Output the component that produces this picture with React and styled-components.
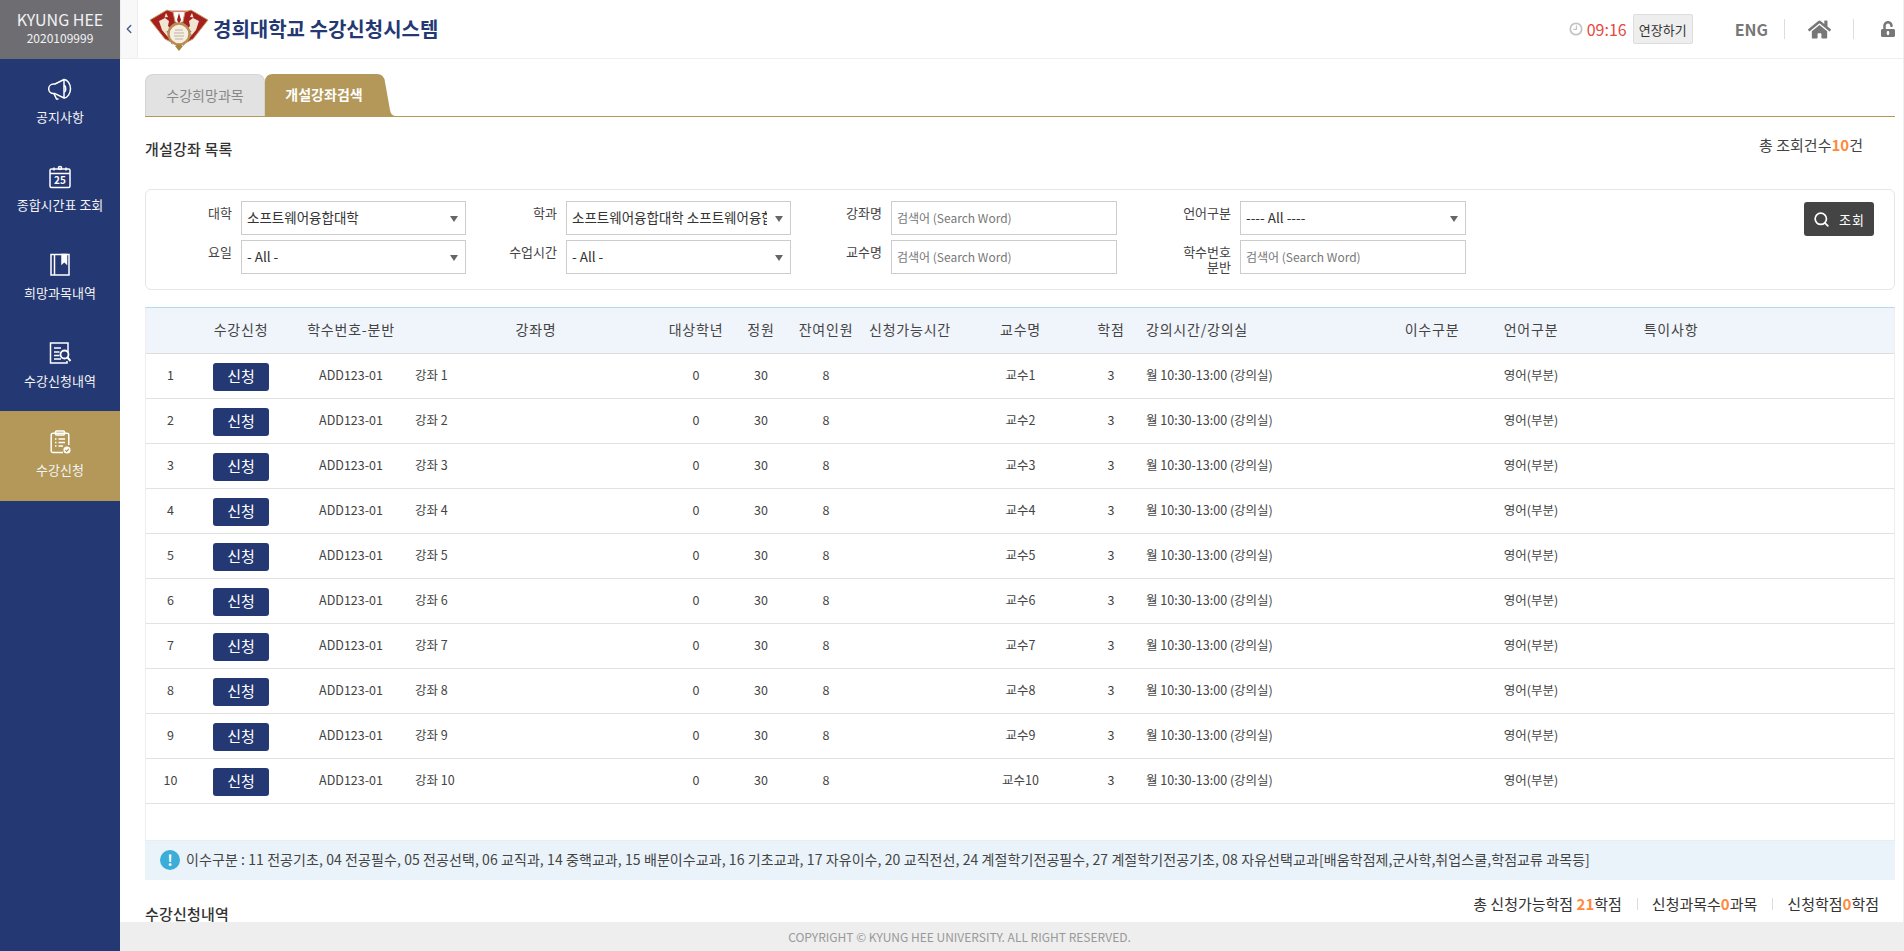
import React from 'react'
import styled, { createGlobalStyle } from 'styled-components'
import { ChevronLeft, Search } from 'lucide-react'
import { FaHome, FaUnlockAlt } from 'react-icons/fa'

const navy = '#243873'
const gold = '#b39859'

const GlobalStyle = createGlobalStyle`
  html, body {
    margin: 0;
    height: 100%;
  }
  body {
    font-family: "Noto Sans CJK KR", "Noto Sans", sans-serif;
    font-size: 12px;
    color: #444;
    background: #fff;
  }
  * {
    box-sizing: border-box;
  }
`

const Page = styled.div`
  display: flex;
  height: 100vh;
  overflow: hidden;
`

const Sidebar = styled.aside`
  flex: 0 0 120px;
  background: ${navy};
  color: #fff;
`

const UserBox = styled.div`
  height: 59px;
  background: #6e6e72;
  text-align: center;
  padding-top: 8px;
`

const UserName = styled.div`
  font-size: 16px;
  line-height: 22px;
  color: #f2f2f2;
`

const UserId = styled.div`
  font-size: 12px;
  line-height: 16px;
  color: #f2f2f2;
`

const MenuItem = styled.div`
  height: ${(p) => (p.$active ? '90px' : '88px')};
  background: ${(p) => (p.$active ? gold : 'transparent')};
  display: flex;
  flex-direction: column;
  align-items: center;
  padding-top: ${(p) => (p.$active ? '19px' : '18px')};
`

const MenuIcon = styled.svg`
  width: 24px;
  height: 24px;
  fill: none;
  stroke: #fff;
  stroke-width: 1.5;
  flex: none;
`

const MenuLabel = styled.span`
  margin-top: 7px;
  font-size: 13px;
  line-height: 18px;
  color: #f4f4f4;
  white-space: nowrap;
`

const Main = styled.main`
  flex: 1;
  min-width: 0;
  display: flex;
  flex-direction: column;
  border-right: 1px solid #eee;
`

const Header = styled.header`
  flex: 0 0 59px;
  display: flex;
  align-items: center;
  border-bottom: 1px solid #eee;
`

const Collapse = styled.div`
  flex: 0 0 18px;
  height: 100%;
  display: flex;
  align-items: center;
  justify-content: center;
  background: #f8f8f8;
  border-left: 1px solid #f0f0f0;
  border-right: 1px solid #eee;
  color: #47618f;
`

const Logo = styled.svg`
  width: 64px;
  height: 46px;
  margin: 0 1px 0 10px;
  flex: none;
`

const SiteTitle = styled.h1`
  margin: 0;
  font-size: 20px;
  line-height: 28px;
  font-weight: 700;
  color: ${navy};
  white-space: nowrap;
`

const HeaderRight = styled.div`
  margin-left: auto;
  display: flex;
  align-items: center;
  padding-right: 7px;
`

const Clock = styled.svg`
  width: 14px;
  height: 14px;
  fill: none;
  stroke: #c4c4c4;
  stroke-width: 2;
  margin-right: 4px;
`

const Time = styled.span`
  font-size: 16px;
  color: #e6483d;
  margin-right: 6px;
`

const Extend = styled.button`
  width: 60px;
  height: 30px;
  padding: 0;
  background: #eee;
  border: 1px solid #ddd;
  border-radius: 2px;
  font-family: inherit;
  font-size: 13px;
  color: #333;
  margin-right: 42px;
`

const Eng = styled.span`
  font-size: 16px;
  font-weight: 700;
  color: #777;
`

const Divider = styled.span`
  width: 1px;
  height: 20px;
  background: #ddd;
  margin: ${(p) => p.$margin};
`

const Content = styled.div`
  flex: 1;
  min-height: 0;
  overflow: hidden;
  padding: 15px 8px 0 25px;
`

const TabBar = styled.div`
  display: flex;
  height: 43px;
  border-bottom: 1px solid ${gold};
`

const Tab = styled.div`
  width: 120px;
  height: 42px;
  padding-bottom: 2px;
  display: flex;
  align-items: center;
  justify-content: center;
  background: #e2e2e2;
  border: 1px solid #d4d4d4;
  border-bottom: 0;
  border-radius: 8px 8px 0 0;
  font-size: 14px;
  color: #888;
`

const ActiveTab = styled.div`
  width: 131px;
  height: 42px;
  padding: 0 13px 2px 0;
  display: flex;
  align-items: center;
  justify-content: center;
  background: ${gold};
  clip-path: path("M0 42 V8 Q0 0 8 0 H112 Q119 0 120 8 L125 36 Q126 42 131 42 Z");
  font-size: 14px;
  font-weight: 700;
  color: #fff;
`

const SectionHead = styled.div`
  display: flex;
  justify-content: space-between;
  height: 72px;
`

const Heading = styled.h2`
  margin: 0;
  padding-top: ${(p) => p.$top};
  font-size: 15px;
  line-height: 20px;
  font-weight: 500;
  letter-spacing: 0.2px;
  color: #333;
`

const TotalCount = styled.div`
  padding: 18px 32px 0 0;
  font-size: 15px;
  line-height: 20px;
  color: #444;
`

const Orange = styled.b`
  color: #ff8a3c;
`

const FilterCard = styled.form`
  display: grid;
  grid-template-columns: 95px 225px 100px 225px 100px 226px 123px 226px 1fr;
  grid-auto-rows: 34px;
  row-gap: 5px;
  height: 101px;
  padding-top: 11px;
  border: 1px solid #e6e6e6;
  border-radius: 6px;
  margin-bottom: 17px;
`

const FilterLabel = styled.label`
  padding: 4px 9px 0 0;
  text-align: right;
  font-size: 13px;
  line-height: 15px;
  color: #444;
`

const SelectWrap = styled.div`
  position: relative;

  &::after {
    content: '';
    position: absolute;
    right: 8px;
    top: 15px;
    border-left: 4px solid transparent;
    border-right: 4px solid transparent;
    border-top: 6px solid #666;
  }
`

const Select = styled.select`
  width: 100%;
  height: 34px;
  appearance: none;
  padding: 0 23px 3px 5px;
  border: 1px solid #ccc;
  border-radius: 0;
  background: #fff;
  font-family: inherit;
  font-size: 13.5px;
  color: #333;
`

const Input = styled.input`
  width: 100%;
  height: 34px;
  padding: 0 5px 2px;
  border: 1px solid #ccc;
  border-radius: 0;
  font-family: inherit;
  font-size: 12px;

  &::placeholder {
    color: #777;
  }
`

const SearchButton = styled.button`
  justify-self: end;
  width: 70px;
  height: 34px;
  margin: 1px 20px 0 0;
  display: flex;
  align-items: center;
  justify-content: center;
  gap: 9px;
  padding: 0;
  background: #444;
  border: 0;
  border-radius: 3px;
  font-family: inherit;
  font-size: 13px;
  letter-spacing: 1px;
  color: #fff;
`

const TableBox = styled.div`
  border-left: 1px solid #eee;
  border-right: 1px solid #eee;
  border-top: 1px solid #b4d9f2;
  padding-bottom: 36px;
`

const Table = styled.table`
  width: 100%;
  table-layout: fixed;
  border-collapse: collapse;
`

const Th = styled.th`
  height: 45px;
  padding: 0 0 2px ${(p) => (p.$left ? '10px' : '0')};
  background: #f0f4fb;
  border-bottom: 1px solid #ddd;
  font-size: 14px;
  font-weight: 400;
  letter-spacing: 0.8px;
  color: #444;
  text-align: ${(p) => (p.$left ? 'left' : 'center')};
  white-space: nowrap;
`

const Td = styled.td`
  height: 45px;
  padding: 0 0 2px ${(p) => (p.$indent ? '10px' : '0')};
  border-bottom: 1px solid #e2e2e2;
  font-size: 12.5px;
  color: #444;
  text-align: ${(p) => (p.$left ? 'left' : 'center')};
  white-space: nowrap;
`

const ApplyButton = styled.button`
  width: 56px;
  height: 28px;
  margin-top: 4px;
  padding: 0 0 2px;
  background: ${navy};
  border: 0;
  border-radius: 3px;
  font-family: inherit;
  font-size: 15px;
  color: #fff;
  vertical-align: middle;
`

const InfoBox = styled.div`
  height: 40px;
  display: flex;
  align-items: center;
  padding: 0 0 2px 15px;
  background: #eaf3fa;
  border-top: 1px solid #e4eef6;
  font-size: 14px;
  letter-spacing: 0.08px;
  color: #444;
  white-space: nowrap;
`

const InfoIcon = styled.span`
  flex: none;
  width: 20px;
  height: 20px;
  margin: 2px 6px 0 0;
  border-radius: 50%;
  background: #3badd9;
  color: #fff;
  font-size: 15px;
  font-weight: 700;
  line-height: 20px;
  text-align: center;
`

const SummaryRow = styled.div`
  display: flex;
  justify-content: space-between;
`

const Summary = styled.div`
  display: flex;
  align-items: center;
  align-self: flex-start;
  padding: 14px 16px 0 0;
  font-size: 15px;
  line-height: 20px;
  color: #333;
`

const SummarySep = styled.span`
  width: 1px;
  height: 12px;
  margin: 0 14px 0 15px;
  background: #ddd;
`

const Footer = styled.footer`
  flex: 0 0 29px;
  display: flex;
  align-items: center;
  justify-content: center;
  padding-right: 104px;
  background: #eee;
  font-size: 12px;
  color: #999;
`

const columns = [49, 92, 128, 242, 78, 52, 78, 90, 131, 50, 256, 80, 118, 162]

const heads = [
  { label: '' },
  { label: '수강신청' },
  { label: '학수번호-분반' },
  { label: '강좌명' },
  { label: '대상학년' },
  { label: '정원' },
  { label: '잔여인원' },
  { label: '신청가능시간' },
  { label: '교수명' },
  { label: '학점' },
  { label: '강의시간/강의실', left: true },
  { label: '이수구분' },
  { label: '언어구분' },
  { label: '특이사항' },
  { label: '' }
]

const rows = Array.from({ length: 10 }, (_, i) => i + 1)

const FlagSide = () => (
  <>
    <path d="M2 14 L19 4 L25 6 L28 20 L27 38 L17 33 Z" fill="#a5201f" stroke="#c9a063" strokeWidth="1" />
    <path d="M11 15 L17 12 L21 15 L20 20 L25 25 L25 35 L19 30 L14 24 Z" fill="#f1e5cf" />
    <path d="M18 7 L20 11 L16.5 11.5 Z" fill="#f1e5cf" />
  </>
)

const Emblem = () => (
  <Logo viewBox="0 0 64 46">
    <rect x="22" y="4.5" width="18" height="1.6" fill="#d9827a" />
    <FlagSide />
    <g transform="matrix(-1 0 0 1 62 0)">
      <FlagSide />
    </g>
    <path d="M31 7 L33 14 L31 18 L29 14 Z" fill="#a5201f" />
    <circle cx="31" cy="28" r="10.5" fill="#f6efe0" stroke="#bd8c52" strokeWidth="2.4" />
    <circle cx="31" cy="28" r="12" fill="none" stroke="#3d5a8c" strokeWidth="0.8" strokeDasharray="1.5 5" />
    <path d="M27 24 H35 M26 27 H36 M26 30 H36 M27 33 H35" stroke="#b9b3a6" strokeWidth="1" />
    <path d="M27 40 L31 45 L35 40 L31 38 Z" fill="#a8843f" />
  </Logo>
)

const MegaphoneIcon = () => (
  <MenuIcon viewBox="0 0 24 24">
    <path d="M16 2.5 L7 7 H5.5 a4.8 4.8 0 0 0 0 9.6 H7 L16 21 Z" strokeLinejoin="round" />
    <path d="M16 2.5 C19.5 2.5 22.5 7 22.5 11.8 C22.5 16.5 19.5 21 16 21" />
    <path d="M16 8.5 C18 8.5 18.5 15 16 15" />
    <path d="M6 16.6 L8.5 22 H10.5" />
  </MenuIcon>
)

const CalendarIcon = () => (
  <MenuIcon viewBox="0 0 24 24">
    <rect x="2" y="4" width="20" height="18.5" rx="1.5" />
    <path d="M2 8.5 H22" />
    <path d="M6 2.5 V5.5 M18 2.5 V5.5" />
    <circle cx="12" cy="3" r="1.6" />
    <text x="12" y="19" textAnchor="middle" fontSize="10" fontWeight="700" fill="#fff" stroke="none" fontFamily="Noto Sans CJK KR, sans-serif">25</text>
  </MenuIcon>
)

const BookIcon = () => (
  <MenuIcon viewBox="0 0 24 24">
    <rect x="3" y="1.5" width="18" height="20.5" />
    <path d="M6.5 1.5 V22" />
    <path d="M14 1.5 H18.5 V10.5 L16.2 8.5 L14 10.5 Z" fill="#fff" />
  </MenuIcon>
)

const DocSearchIcon = () => (
  <MenuIcon viewBox="0 0 24 24">
    <path d="M20 11 V2 H2.5 V22 H19 V20" />
    <path d="M6 7 H13 M6 11 H11.5 M6 14.5 H11.5 M6 18 H13" strokeWidth="1.7" />
    <circle cx="16.5" cy="13.5" r="4" strokeWidth="1.8" />
    <path d="M19.5 16.5 L22.5 20" strokeWidth="2" />
  </MenuIcon>
)

const ClipboardIcon = () => (
  <MenuIcon viewBox="0 0 24 24">
    <path d="M15 22.5 H5 a1.8 1.8 0 0 1 -1.8 -1.8 V5 A1.8 1.8 0 0 1 5 3.2 H19 A1.8 1.8 0 0 1 20.8 5 V15" />
    <rect x="7.5" y="1" width="9" height="4" rx="1" />
    <path d="M7 9 H8.5 M7 12.5 H8.5 M7 16 H8.5 M10.5 9 H17 M10.5 12.5 H17 M10.5 16 H15" strokeWidth="1.3" />
    <circle cx="19" cy="20" r="3.6" fill="#fff" stroke="none" />
    <path d="M17.2 20 L18.6 21.4 L21 18.8" stroke={gold} strokeWidth="1.2" />
  </MenuIcon>
)

const menu = [
  { label: '공지사항', icon: <MegaphoneIcon /> },
  { label: '종합시간표 조회', icon: <CalendarIcon /> },
  { label: '희망과목내역', icon: <BookIcon /> },
  { label: '수강신청내역', icon: <DocSearchIcon /> },
  { label: '수강신청', icon: <ClipboardIcon />, active: true }
]

const App = () => {
  return (
    <Page>
      <GlobalStyle />
      <Sidebar>
        <UserBox>
          <UserName>KYUNG HEE</UserName>
          <UserId>2020109999</UserId>
        </UserBox>
        {menu.map((item) => (
          <MenuItem key={item.label} $active={item.active}>
            {item.icon}
            <MenuLabel>{item.label}</MenuLabel>
          </MenuItem>
        ))}
      </Sidebar>
      <Main>
        <Header>
          <Collapse>
            <ChevronLeft size={14} strokeWidth={2.5} />
          </Collapse>
          <Emblem />
          <SiteTitle>경희대학교 수강신청시스템</SiteTitle>
          <HeaderRight>
            <Clock viewBox="0 0 16 16">
              <circle cx="8" cy="8" r="6.5" />
              <path d="M8.5 4 V8.5 H5" strokeWidth="1.4" />
            </Clock>
            <Time>09:16</Time>
            <Extend type="button">연장하기</Extend>
            <Eng>ENG</Eng>
            <Divider $margin="0 23px 0 16px" />
            <FaHome size={23} color="#777" />
            <Divider $margin="0 26px 0 22px" />
            <FaUnlockAlt size={16} color="#777" />
          </HeaderRight>
        </Header>
        <Content>
          <TabBar>
            <Tab>수강희망과목</Tab>
            <ActiveTab>개설강좌검색</ActiveTab>
          </TabBar>
          <SectionHead>
            <Heading $top="22px">개설강좌 목록</Heading>
            <TotalCount>
              총 조회건수<Orange>10</Orange>건
            </TotalCount>
          </SectionHead>
          <FilterCard>
            <FilterLabel>대학</FilterLabel>
            <SelectWrap>
              <Select defaultValue="a">
                <option value="a">소프트웨어융합대학</option>
              </Select>
            </SelectWrap>
            <FilterLabel>학과</FilterLabel>
            <SelectWrap>
              <Select defaultValue="a">
                <option value="a">소프트웨어융합대학 소프트웨어융합학과</option>
              </Select>
            </SelectWrap>
            <FilterLabel>강좌명</FilterLabel>
            <Input placeholder="검색어 (Search Word)" />
            <FilterLabel>언어구분</FilterLabel>
            <SelectWrap>
              <Select defaultValue="a">
                <option value="a">---- All ----</option>
              </Select>
            </SelectWrap>
            <SearchButton type="button">
              <Search size={17} strokeWidth={2.4} />
              조회
            </SearchButton>
            <FilterLabel>요일</FilterLabel>
            <SelectWrap>
              <Select defaultValue="a">
                <option value="a">- All -</option>
              </Select>
            </SelectWrap>
            <FilterLabel>수업시간</FilterLabel>
            <SelectWrap>
              <Select defaultValue="a">
                <option value="a">- All -</option>
              </Select>
            </SelectWrap>
            <FilterLabel>교수명</FilterLabel>
            <Input placeholder="검색어 (Search Word)" />
            <FilterLabel>
              학수번호
              <br />
              분반
            </FilterLabel>
            <Input placeholder="검색어 (Search Word)" />
          </FilterCard>
          <TableBox>
            <Table>
              <colgroup>
                {columns.map((width, i) => (
                  <col key={i} width={width} />
                ))}
                <col />
              </colgroup>
              <thead>
                <tr>
                  {heads.map((head, i) => (
                    <Th key={i} $left={head.left}>
                      {head.label}
                    </Th>
                  ))}
                </tr>
              </thead>
              <tbody>
                {rows.map((n) => (
                  <tr key={n}>
                    <Td>{n}</Td>
                    <Td>
                      <ApplyButton type="button">신청</ApplyButton>
                    </Td>
                    <Td>ADD123-01</Td>
                    <Td $left>강좌 {n}</Td>
                    <Td>0</Td>
                    <Td>30</Td>
                    <Td>8</Td>
                    <Td />
                    <Td>교수{n}</Td>
                    <Td>3</Td>
                    <Td $left $indent>월 10:30-13:00 (강의실)</Td>
                    <Td />
                    <Td>영어(부분)</Td>
                    <Td />
                    <Td />
                  </tr>
                ))}
              </tbody>
            </Table>
          </TableBox>
          <InfoBox>
            <InfoIcon>!</InfoIcon>
            이수구분 : 11 전공기초, 04 전공필수, 05 전공선택, 06 교직과, 14 중핵교과, 15 배분이수교과, 16 기초교과, 17 자유이수, 20 교직전선, 24 계절학기전공필수, 27 계절학기전공기초, 08 자유선택교과[배움학점제,군사학,취업스쿨,학점교류 과목등]
          </InfoBox>
          <SummaryRow>
            <Heading $top="24px">수강신청내역</Heading>
            <Summary>
              총 신청가능학점&nbsp;<Orange>21</Orange>학점
              <SummarySep />
              신청과목수<Orange>0</Orange>과목
              <SummarySep />
              신청학점<Orange>0</Orange>학점
            </Summary>
          </SummaryRow>
        </Content>
        <Footer>COPYRIGHT © KYUNG HEE UNIVERSITY. ALL RIGHT RESERVED.</Footer>
      </Main>
    </Page>
  )
}

export default App
